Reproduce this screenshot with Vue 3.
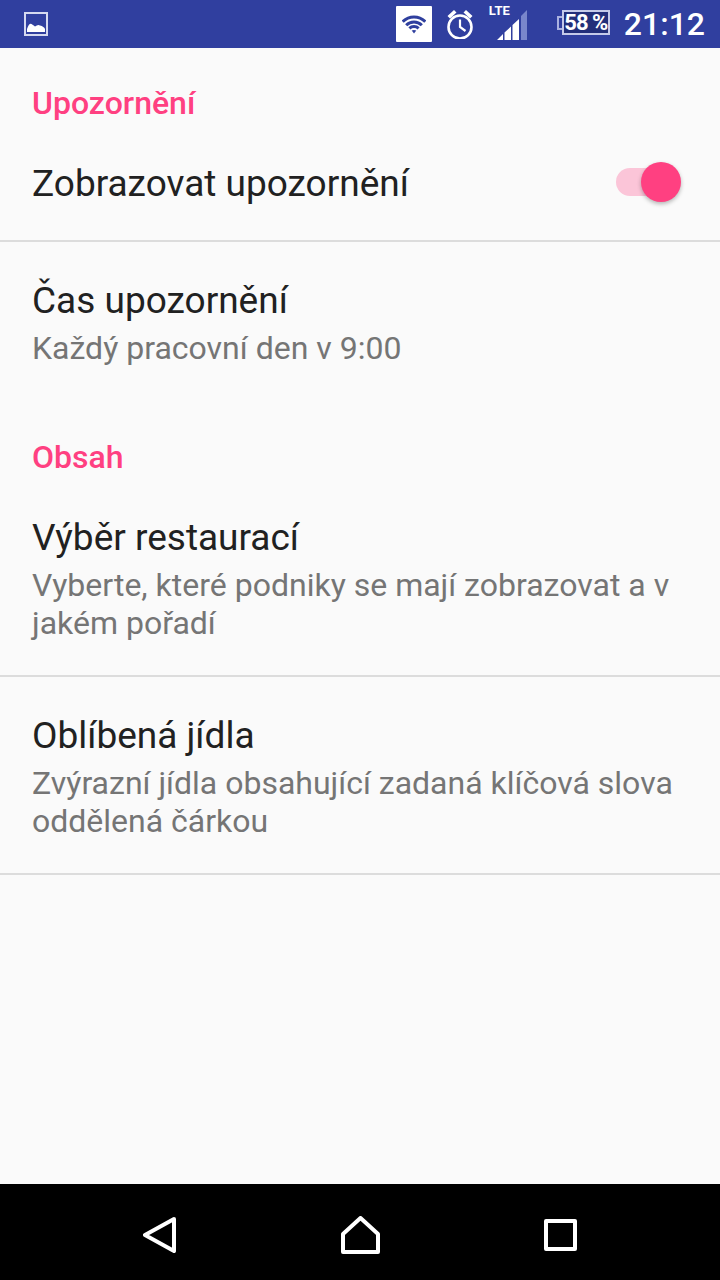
<script setup>
const sections = [
  {
    title: 'Upozornění',
    rows: [
      { title: 'Zobrazovat upozornění', toggle: true, divider: true },
      { title: 'Čas upozornění', sub: 'Každý pracovní den v 9:00' }
    ]
  },
  {
    title: 'Obsah',
    rows: [
      { title: 'Výběr restaurací', sub: 'Vyberte, které podniky se mají zobrazovat a v jakém pořadí', divider: true },
      { title: 'Oblíbená jídla', sub: 'Zvýrazní jídla obsahující zadaná klíčová slova oddělená čárkou', divider: true }
    ]
  }
]
</script>

<template>
  <div class="screen">
    <div class="status-bar">
      <svg class="pic-icon" width="24" height="24" viewBox="0 0 24 24">
        <rect x="1" y="1" width="22" height="22" fill="none" stroke="#d5d9f0" stroke-width="2" />
        <path d="M3 20 L3 17 Q5 11 7.5 12 Q9.5 13 11 14.5 Q14 12 16 13.5 Q20 14.5 21 17 L21 20 Z" fill="#fff" />
      </svg>
      <div class="status-right">
        <div class="wifi-box">
          <svg width="24" height="20" viewBox="0 0 24 20" fill="none" stroke="#2f3f9e" stroke-width="3">
            <path d="M0.7 7.7 A16 16 0 0 1 23.3 7.7" />
            <path d="M4.2 11.2 A11 11 0 0 1 19.8 11.2" />
            <path d="M7.4 14.4 A6.5 6.5 0 0 1 16.6 14.4" />
            <path d="M9.7 16.6 Q12 15.4 14.3 16.6 L12 19.5 Z" fill="#2f3f9e" stroke="none" />
          </svg>
        </div>
        <svg class="alarm" width="28" height="30" viewBox="0 0 28 30" fill="none" stroke="#fff">
          <circle cx="13" cy="18" r="11.500" stroke-width="2.600" />
          <path d="M13 10.500 V18 L18.500 22" stroke-width="2.200" />
          <path d="M0.500 7 L7 1 L9.500 3.500 L3 9.500 Z M25.500 7 L19 1 L16.500 3.500 L23 9.500 Z" fill="#fff" stroke="none" />
        </svg>
        <div class="signal">
          <span class="lte">LTE</span>
          <svg width="30" height="30" viewBox="0 0 30 30">
            <path d="M0 30 L6 30 L6 24 Z M7.500 30 L14 30 L14 16.500 L7.500 22.500 Z M15.500 30 L22 30 L22 9 L15.500 15 Z" fill="#fff" />
            <path d="M24 30 L30 30 L30 0 L24 6 Z" fill="#7986cb" />
          </svg>
        </div>
        <div class="battery">
          <span class="battery-tip"></span>
          <span class="battery-body">58 %</span>
        </div>
        <span class="clock">21:12</span>
      </div>
    </div>

    <main class="content">
      <section v-for="section in sections" :key="section.title" class="section">
        <h2 class="section-title">{{ section.title }}</h2>
        <div
          v-for="(row, i) in section.rows"
          :key="row.title"
          :class="['row', { first: i === 0, divider: row.divider }]"
        >
          <div class="row-text">
            <div class="row-title">{{ row.title }}</div>
            <div v-if="row.sub" class="row-sub">{{ row.sub }}</div>
          </div>
          <div v-if="row.toggle" class="switch">
            <span class="switch-track"></span>
            <span class="switch-thumb"></span>
          </div>
        </div>
      </section>
    </main>

    <nav class="nav-bar">
      <svg width="33" height="36" viewBox="0 0 33 36" fill="none" stroke="#fff" stroke-width="4" stroke-linejoin="round">
        <path d="M31 2 L2 18 L31 34 Z" />
      </svg>
      <svg width="39" height="38" viewBox="0 0 39 38" fill="none" stroke="#fff" stroke-width="4" stroke-linejoin="round">
        <path d="M19.500 2 L37 18 V36 H2 V18 Z" />
      </svg>
      <svg width="33" height="32" viewBox="0 0 33 32" fill="none" stroke="#fff" stroke-width="4" stroke-linejoin="round">
        <rect x="2" y="2" width="29" height="28" />
      </svg>
    </nav>
  </div>
</template>

<style scoped>
.screen {
  width: 720px;
  height: 1280px;
  display: flex;
  flex-direction: column;
  background: #fafafa;
  font-family: Roboto, "Liberation Sans", sans-serif;
  overflow: hidden;
}

.status-bar {
  height: 48px;
  flex-shrink: 0;
  background: #303f9f;
  display: flex;
  align-items: center;
  justify-content: space-between;
  padding: 0 15px 0 24px;
  color: #fff;
}

.status-right {
  display: flex;
  align-items: center;
}

.wifi-box {
  width: 36px;
  height: 36px;
  background: #fff;
  border-radius: 1px;
  display: flex;
  align-items: center;
  justify-content: center;
  margin-right: 15px;
}

.alarm {
  margin-right: 22px;
}

.signal {
  position: relative;
  width: 30px;
  height: 40px;
  display: flex;
  align-items: flex-end;
  margin-right: 30px;
  margin-bottom: 8px;
}

.lte {
  position: absolute;
  left: -8px;
  top: 4px;
  font-size: 13px;
  font-weight: 700;
  line-height: 14px;
}

.battery {
  display: flex;
  align-items: center;
  margin-right: 14px;
  margin-bottom: 3px;
}

.battery-tip {
  width: 5px;
  height: 14px;
  border: 2px solid #aab2e0;
  border-right: none;
  box-sizing: border-box;
}

.battery-body {
  width: 48px;
  height: 25px;
  box-sizing: border-box;
  border: 2px solid #c5cae9;
  background: #232f7a;
  font-size: 22px;
  font-weight: 700;
  line-height: 21px;
  text-align: center;
  white-space: nowrap;
  letter-spacing: -1px;
}

.clock {
  font-size: 32px;
  line-height: 36px;
  font-weight: 500;
}

.content {
  flex: 1;
}

.section-title {
  margin: 0;
  padding: 38px 32px 0;
  font-size: 32px;
  line-height: 38px;
  font-weight: 500;
  color: #ff4081;
}

.section:first-child .section-title {
  padding-top: 36px;
}

.row {
  padding: 36px 32px 33px;
  display: flex;
  align-items: center;
}

.row.first {
  padding-top: 39px;
}

.row-text {
  flex: 1;
}

.row-title {
  font-size: 37px;
  line-height: 46px;
  color: #212121;
}

.row-sub {
  margin-top: 5px;
  font-size: 32px;
  line-height: 38px;
  color: #757575;
}

.divider {
  border-bottom: 2px solid #dcdcdc;
}

.switch {
  position: relative;
  width: 65px;
  height: 40px;
  margin-right: 7px;
  margin-bottom: 4px;
}

.switch-track {
  position: absolute;
  left: 0;
  top: 6px;
  width: 60px;
  height: 28px;
  border-radius: 14px;
  background: #fbc5d8;
}

.switch-thumb {
  position: absolute;
  right: 0;
  top: 0;
  width: 40px;
  height: 40px;
  border-radius: 50%;
  background: #ff4081;
  box-shadow: 0 2px 4px rgba(0, 0, 0, 0.28);
}

.nav-bar {
  height: 96px;
  box-sizing: border-box;
  flex-shrink: 0;
  background: #000;
  display: flex;
  align-items: center;
  justify-content: space-between;
  padding: 5px 143px 0;
}
</style>
